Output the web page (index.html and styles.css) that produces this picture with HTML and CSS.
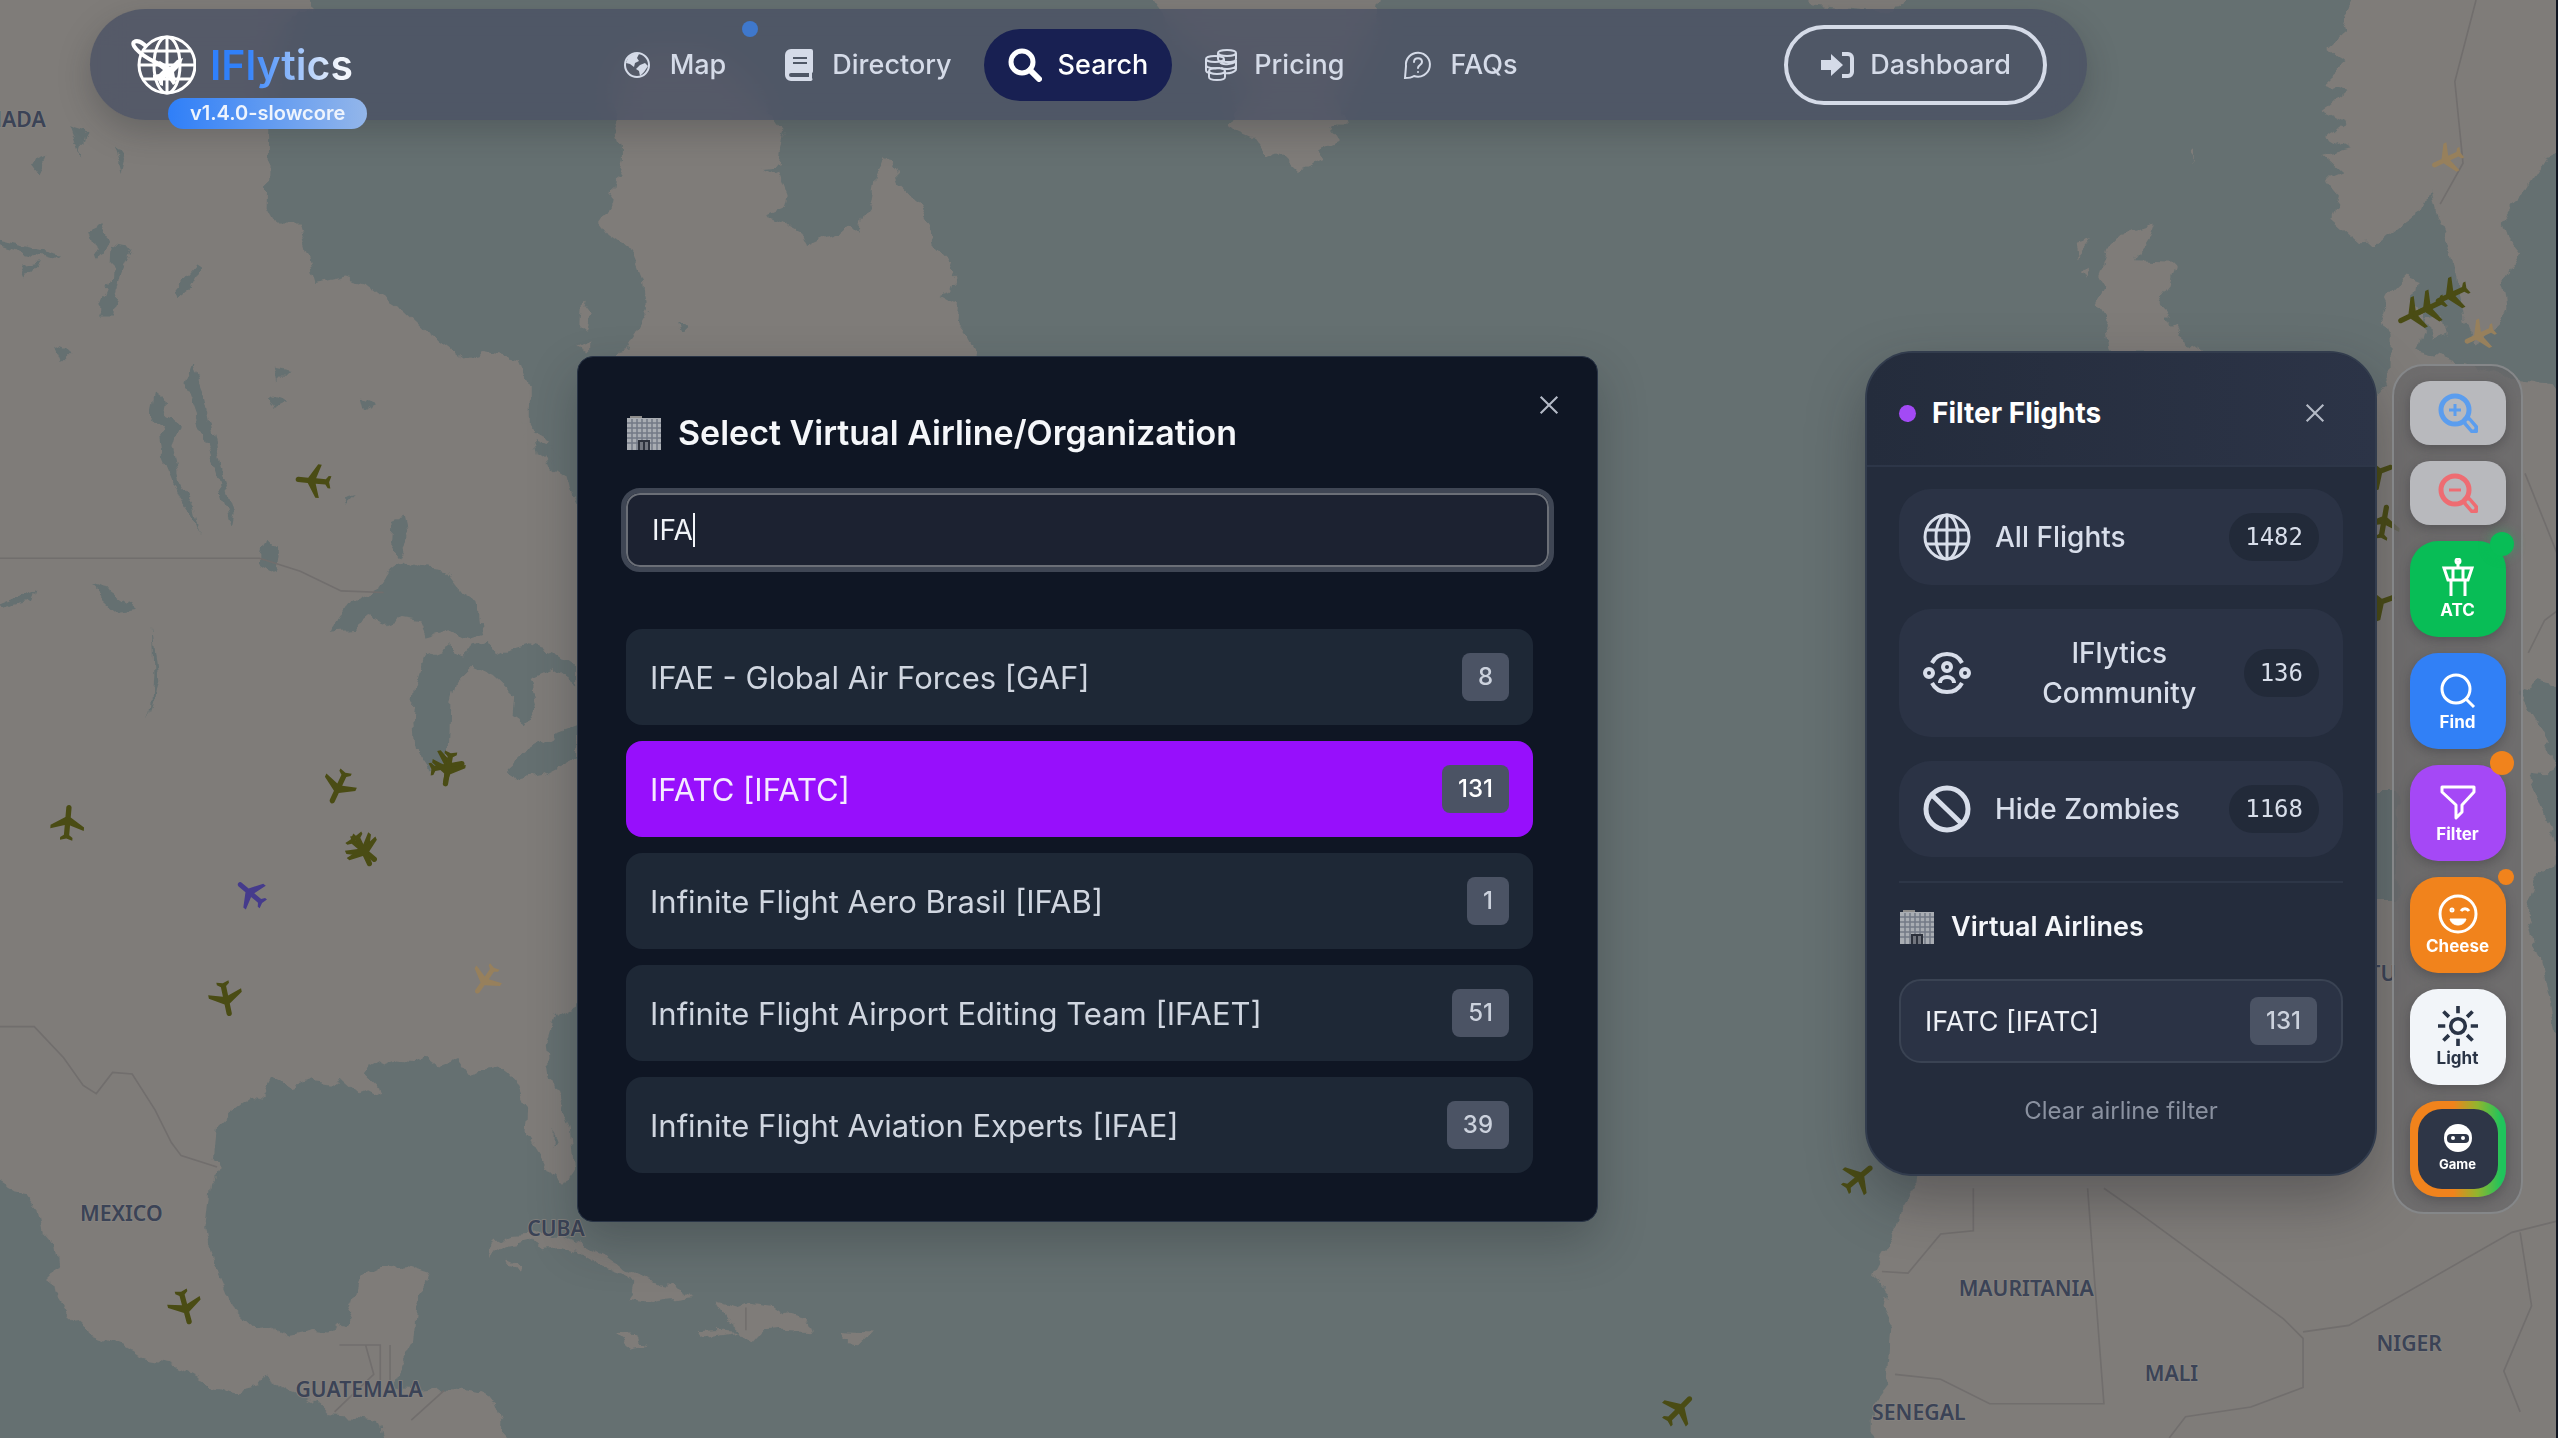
FILE: index.html
```html
<!DOCTYPE html>
<html lang="en">
<head>
<meta charset="utf-8">
<title>IFlytics</title>
<link rel="stylesheet" href="styles.css">
</head>
<body>
<svg width="0" height="0" class="defs" aria-hidden="true">
  <defs>
    <symbol id="plane" viewBox="0 0 24 24"><path d="M21 16v-2l-8-5V3.500c0-.83-.67-1.500-1.500-1.500S10 2.670 10 3.500V9l-8 5v2l8-2.500V19l-2 1.500V22l3.500-1 3.500 1v-1.500L13 19v-5.500l8 2.500z"/></symbol>
    <symbol id="building" viewBox="0 0 36 36">
      <path d="M4 1h12v4H4z" fill="#8d8c8b"/><path d="M1 3h34v32H1z" fill="#a9adb3"/>
      <path d="M1 8h34M1 13h34M1 18h34M1 23h34M1 28h34M6 4v31M11 4v31M16 4v31M21 4v31M26 4v31M31 4v31" stroke="#737a86" stroke-width="1.500"/>
      <path d="M12 25h12v10H12z" fill="#2c313c"/><path d="M14 27h3v8h-3zM19 27h3v8h-3z" fill="#71757e"/>
    </symbol>
    <symbol id="cross" viewBox="0 0 24 24"><path d="M2 2l20 20M22 2L2 22" fill="none" stroke="currentColor" stroke-width="2.500"/></symbol>
    <symbol id="globe" viewBox="0 0 48 48"><g fill="none" stroke="currentColor" stroke-width="3"><circle cx="24" cy="24" r="22"/><ellipse cx="24" cy="24" rx="11" ry="22"/><path d="M24 2v44M4 17h40M4 31h40"/></g></symbol>
    <filter id="coast" x="-2%" y="-2%" width="104%" height="104%">
      <feTurbulence type="fractalNoise" baseFrequency="0.09" numOctaves="3" seed="4" result="noise"/>
      <feDisplacementMap in="SourceGraphic" in2="noise" scale="9" xChannelSelector="R" yChannelSelector="G"/>
    </filter>
  </defs>
</svg>
<div class="page">
  <svg class="map" viewBox="0 0 1568 881" preserveAspectRatio="xMidYMid slice" aria-hidden="true">
    <g class="land" filter="url(#coast)">
      <path d="M-20 -20H186L192 4 176 14 168 40 166 80 165 128 170 137H184L188 150 195 174 212 170 224 173 235 182 248 190 262 203 273 210 285 219 298 215 318 219 325 236V262L331 270 336 284 348 292 350 302 365 330 420 320 385 250 378 222 390 205 398 190 396 170 390 155 374 144 368 136 376 124 378 112 382 98V88L377 73 380 40 400 30 440 34 466 60 475 73 481 82 478 102 468 103 479 109 483 120 481 128 470 133 478 135 492 142 495 152 508 146 516 143 522 138 527 142 530 132 535 125 538 108 543 95 550 105 553 113 560 120 565 128 570 137 573 150 581 158 587 168 584 178 577 180 588 186 587 196 594 205 600 216V560L360 600 354 616 341 623 336 640 339 660 350 690 353 716 346 726 338 718 328 702 323 694 324 680 318 665 311 657 305 653 296 655 287 660 280 650 270 654 262 648 254 652 244 651 236 654 227 650 224 657 232 665 234 672 226 668 221 670 211 661 203 664 190 662 179 666 168 659 163 669 158 673 150 676 140 684 134 690 132 710 135 718 131 725 128 753 132 773 137 784 145 803 158 815 168 814 178 819 192 816 202 817 212 811 218 798 222 783 234 777 252 775 264 779 261 792 256 802 254 823 247 836 243 850 260 852 276 850 288 852 298 854 306 859 310 870 309 900H240L232 870 218 868 203 867 196 860 190 857 180 853 165 844 160 850 147 853 130 849 122 844 105 835 88 832 76 825 56 817 43 806 35 793 33 780 36 775 34 762 28 755 25 742 16 731 10 730 0 724 -20 700z"/>
      <path d="M300 770L304 761 315 756 330 755 345 757 360 763 371 769 384 778 398 785 412 788 424 794 400 797 386 795 390 790 382 780 370 776 355 767 346 764 334 766 322 760 312 762z"/>
      <path d="M440 798L452 801 460 798 474 800 484 807 496 810 498 815 480 814 468 815 461 823 454 815 430 819 427 815 444 814 455 815 446 808zM376 817L390 818 399 824 386 826zM516 816L534 817 528 823 516 822zM312 772L320 776 319 781z"/>
      <path d="M354 212L362 208 362 216zM357 186l6 8-3 8-4-3zM320 260l18 10-2 4-12-4z"/>
      <path d="M700 -10H850L842 20 820 60 825 73 818 80 822 86 808 92 812 98 796 104 784 92 776 95 768 84 752 77 770 50 730 30zM1098 -10h87l-20 15-20 2-32-3zM1342 92l3-1v9zM1272 150l10-3-8 10zM1276 166l6-2-3 8z"/>
      <path d="M1449 -10L1436 8 1440 20 1428 30 1438 38 1424 50 1440 55 1424 68 1438 75 1426 84 1440 92 1425 96 1436 106 1426 110 1434 120 1430 134 1447 149 1460 148 1472 138 1486 128 1490 118 1494 132 1500 148 1505 165 1511 197 1517 211 1530 202 1536 190 1534 174 1545 156 1538 148 1535 136 1550 112 1560 96 1590 84V-10z"/>
      <path d="M1465 230V205L1460 190 1465 180 1476 169 1481 171 1479 185 1488 190 1486 200 1482 215 1500 220 1520 226 1540 232 1590 240V425L1555 418 1545 425 1560 450 1568 470 1558 475 1550 474 1568 520V528L1556 535 1549 560 1560 600 1568 640 1590 640V900H1147L1148 862 1157 850 1158 838 1160 810 1155 800 1157 790 1148 782 1150 775 1163 753 1166 740 1175 725 1180 700 1450 560V552H1470V484H1452V250z"/>
      <path d="M1294 216L1292 198 1286 188 1292 176 1287 168 1292 152 1300 144 1321 138 1318 146 1309 160 1334 161 1331 175 1323 186 1329 192 1336 206 1350 216zM1488 195l10-2 2 12-9 3z"/>
    </g>
    <g class="water" filter="url(#coast)">
      <path d="M203 387L215 370 232 362 240 350 249 343 260 348 274 350 283 362 294 368 297 389 288 392 276 386 262 390 258 380 246 378 236 382 226 378 216 386z"/>
      <path d="M262 402L277 396 284 401 298 394 310 400 325 396 340 401 354 410V420L340 410 326 416 330 430 322 445 315 440 316 425 304 414 290 408 280 418 277 430 276 460 272 470 262 472 256 463 254 440 256 420zM354 445L340 450 320 462 312 469 318 477 334 474 354 464z"/>
      <path d="M114 236l5-13 8 20 5 22 6 26 7 22-2 10-4-14-6-20-14-40zM96 240l8 6-2 10 8 4-4 14 6 24 8 12 4 18-5-12-8-12-10-24-2-16-6-8z"/>
      <path d="M164 330l8 8-2 14-10-6zM241 318l8-2 3 14-6 12-6-10zM170 224l10 2-8 8zM44 78l10 3-4 14zM70 88l7 10-2 8zM20 100l10-4-4 12zM55 142l8-4 4 10-6 12zM70 150l11 2-6 14-6 26-8 0 8-20zM108 178l14-16 3 2-6 12-10 8zM14 162l11-2-8 10zM36 213l10 4-6 6zM0 147l38 9-4 4-34-10zM165 243l12 4-8 4zM222 244l10 4-8 4zM0 370l22-9-2 8-18 4zM55 359l14 3 16 11-12 2zM94 385l4 30-5 25 2-28zM211 304l8-2-6 6zM417 194l6 6-4 4z"/>
      <path d="M328 269l9 4 8 8-3 4-12-8zM339 692l3 8-3 4z"/>
    </g>
    <g class="borders">
      <path d="M0 342H160L185 350 210 362 236 363M0 629H22L40 648 52 665 60 670 70 657 82 658 96 680 106 700 112 708 134 715M209 824H234V855M240 824V850M206 865L230 842 225 824M253 870l20-18M458 801v14"/>
      <path d="M1210 728V754L1190 756 1170 780 1154 779M1280 728L1290 860H1220L1190 845 1162 842M1290 728L1310 742 1400 808 1412 820V850L1380 862 1340 868 1330 881M1412 816L1440 812 1540 755 1568 748M1545 755L1552 800 1535 840 1545 865M1518 0L1505 50 1510 100 1496 125M1548 290l12 30 8 20M1550 400l10-20 8-6"/>
    </g>
    <g class="labels">
      <text x="-25" y="78">CANADA</text><text x="50" y="748">MEXICO</text><text x="324" y="757">CUBA</text><text x="182" y="856">GUATEMALA</text>
      <text x="1201" y="794">MAURITANIA</text><text x="1315" y="846">MALI</text><text x="1457" y="828">NIGER</text><text x="1148" y="870">SENEGAL</text><text x="1452" y="601">TU</text>
    </g>
    <g class="planes">
      <use href="#plane" width="26" height="26" transform="translate(193 294) rotate(-85) translate(-13 -13)"/>
      <use href="#plane" width="26" height="26" transform="translate(43 504) rotate(5) translate(-13 -13)"/>
      <use href="#plane" width="26" height="26" transform="translate(208 482) rotate(205) translate(-13 -13)"/>
      <use href="#plane" width="26" height="26" transform="translate(275 470) rotate(80) translate(-13 -13)"/>
      <use href="#plane" width="26" height="26" transform="translate(275 471) rotate(190) translate(-13 -13)"/>
      <use href="#plane" width="26" height="26" transform="translate(223 521) rotate(130) translate(-13 -13)"/>
      <use href="#plane" width="26" height="26" transform="translate(223 521) rotate(155) translate(-13 -13)"/>
      <use href="#plane" width="26" height="26" transform="translate(139 612) rotate(168) translate(-13 -13)"/>
      <use href="#plane" width="26" height="26" transform="translate(114 801) rotate(165) translate(-13 -13)"/>
      <use href="#plane" width="26" height="26" transform="translate(1140 722) rotate(50) translate(-13 -13)"/>
      <use href="#plane" width="26" height="26" transform="translate(1030 864) rotate(45) translate(-13 -13)"/>
      <use href="#plane" width="26" height="26" transform="translate(1480 192) rotate(245) translate(-13 -13)"/>
      <use href="#plane" width="26" height="26" transform="translate(1489 188) rotate(245) translate(-13 -13)"/>
      <use href="#plane" width="26" height="26" transform="translate(1503 180) rotate(245) translate(-13 -13)"/>
      <use href="#plane" width="26" height="26" transform="translate(1457 290) rotate(70) translate(-13 -13)"/>
      <use href="#plane" width="26" height="26" transform="translate(1462 320) rotate(10) translate(-13 -13)"/>
      <use href="#plane" width="26" height="26" transform="translate(1458 370) rotate(70) translate(-13 -13)"/>
      <use class="vip" href="#plane" width="24" height="24" transform="translate(155 547) rotate(-50) translate(-12 -12)"/>
      <use class="idle" href="#plane" width="24" height="24" transform="translate(298 600) rotate(215) translate(-12 -12)"/>
      <use class="idle" href="#plane" width="24" height="24" transform="translate(1500 97) rotate(245) translate(-12 -12)"/>
      <use class="idle" href="#plane" width="24" height="24" transform="translate(1520 205) rotate(245) translate(-12 -12)"/>
    </g>
  </svg>

  <header class="topbar">
    <a class="brand" href="#">
      <svg class="brand-icon" viewBox="0 0 66 62" fill="none" stroke="#fff">
        <g stroke-width="3"><circle cx="37" cy="31" r="28"/><ellipse cx="37" cy="31" rx="13" ry="28"/><path d="M37 3v56M14 17h46M9 31h56M14 45h46"/></g>
        <path d="M30 30C14 24 0 12 4 8c4-3 8 1 12 4" stroke-width="4"/>
        <path d="M30 27l10 6 7-7 6-2-3 8-6 6 2 11-3 2-6-9-4 4v6l-3-1-2-5-5-2v-3l6-1 4-4-8-6z" fill="#fff" stroke="none"/>
      </svg>
      <span class="brand-name">IFlytics</span>
      <span class="version">v1.4.0-slowcore</span>
    </a>
    <nav class="nav">
      <a class="nav-item" href="#">
        <svg class="nav-icon" viewBox="0 0 34 34"><circle cx="17" cy="17" r="12" fill="none" stroke="currentColor" stroke-width="2"/><path d="M8 10c4-5 8-5 11-4l-2 4 2 3-4 2-1 4-4-3-4-1zM20 17l5-2 3 3-4 6-4 4-1-5-3-2z" fill="currentColor"/></svg>
        Map<span class="nav-dot"></span></a>
      <a class="nav-item" href="#">
        <svg class="nav-icon" viewBox="0 0 34 34"><path d="M9 1h20a2 2 0 0 1 2 2v20a2 2 0 0 1-1 2v5a2 2 0 0 1-1 3H9a6 6 0 0 1-6-6V7a6 6 0 0 1 6-6zm0 24a2 2 0 0 0 0 4h18v-4zM11 9v2h14V9zm0 5v2h14v-2z" fill="currentColor" fill-rule="evenodd"/></svg>
        Directory</a>
      <a class="nav-item active" href="#" aria-current="page">
        <svg class="nav-icon" viewBox="0 0 34 34" fill="none" stroke="currentColor"><circle cx="14" cy="14" r="11" stroke-width="5"/><path d="M22 22l9 9" stroke-width="6" stroke-linecap="round"/></svg>
        Search</a>
      <a class="nav-item" href="#">
        <svg class="nav-icon" viewBox="0 0 34 34" fill="none" stroke="currentColor" stroke-width="2"><ellipse cx="23" cy="5" rx="9" ry="3"/><path d="M14 5v6c0 4 18 4 18 0V5M16 14c2 4 16 2 16-2v5c0 4-11 5-15 3M20 25c5 1 12-1 12-4v-5"/><ellipse cx="11" cy="11" rx="9" ry="3"/><path d="M2 11v6c0 3 8 4 14 3M20 13v-2M2 17v5c0 2 2 3 5 3"/><ellipse cx="13" cy="23" rx="8" ry="3"/><path d="M5 23v6c0 4 16 4 16 0v-6"/></svg>
        Pricing</a>
      <a class="nav-item" href="#">
        <svg class="nav-icon" viewBox="0 0 34 34" fill="none" stroke="currentColor" stroke-width="2" stroke-linecap="round"><path d="M4 30l1-12a12 12 0 1 1 8 10c-3 2-6 2-9 2z"/><path d="M13 14c0-5 8-5 8 0 0 3-4 3-4 6M17 24v0"/></svg>
        FAQs</a>
    </nav>
    <a class="dashboard" href="#">
      <svg class="nav-icon" viewBox="0 0 34 34"><path d="M1 12h10V6l12 11-12 11v-6H1z" fill="currentColor"/><path d="M22 6h6a4 4 0 0 1 4 4v14a4 4 0 0 1-4 4h-6" fill="none" stroke="currentColor" stroke-width="4"/></svg>
      Dashboard</a>
  </header>

  <main class="stage">
    <section class="modal" role="dialog" aria-labelledby="modal-title">
      <button class="close modal-close" aria-label="Close"><svg viewBox="0 0 24 24"><use href="#cross"/></svg></button>
      <h2 class="modal-title" id="modal-title"><svg class="building"><use href="#building"/></svg>Select Virtual Airline/Organization</h2>
      <div class="search-field">
        <input class="search" type="text" value="IFA" aria-label="Search airlines">
        <span class="caret"></span>
      </div>
      <div class="results">
        <button class="result">IFAE - Global Air Forces [GAF]<span class="count">8</span></button>
        <button class="result selected">IFATC [IFATC]<span class="count">131</span></button>
        <button class="result">Infinite Flight Aero Brasil [IFAB]<span class="count">1</span></button>
        <button class="result">Infinite Flight Airport Editing Team [IFAET]<span class="count">51</span></button>
        <button class="result">Infinite Flight Aviation Experts [IFAE]<span class="count">39</span></button>
      </div>
    </section>

    <aside class="filter">
      <div class="filter-head">
        <span class="filter-dot"></span>
        <h2 class="filter-title">Filter Flights</h2>
        <button class="close" aria-label="Close filter"><svg viewBox="0 0 24 24"><use href="#cross"/></svg></button>
      </div>
      <div class="filter-body">
        <button class="option"><svg class="option-icon"><use href="#globe"/></svg><span>All Flights</span><span class="total">1482</span></button>
        <button class="option wrap">
          <svg class="option-icon" viewBox="0 0 48 48" fill="none" stroke="currentColor" stroke-width="4"><circle cx="6" cy="24" r="4"/><circle cx="42" cy="24" r="4"/><circle cx="24" cy="18" r="4"/><path d="M17 34c0-8 14-8 14 0M9 14c6-12 24-12 30 0M9 34c6 12 24 12 30 0"/></svg>
          <span>IFlytics Community</span><span class="total">136</span></button>
        <button class="option">
          <svg class="option-icon" viewBox="0 0 48 48" fill="none" stroke="currentColor" stroke-width="5"><circle cx="24" cy="24" r="21"/><path d="M9 10l30 29"/></svg>
          <span>Hide Zombies</span><span class="total">1168</span></button>
        <section class="airlines">
          <h3 class="airlines-title"><svg class="building"><use href="#building"/></svg>Virtual Airlines</h3>
          <button class="airline">IFATC [IFATC]<span class="count">131</span></button>
          <button class="clear">Clear airline filter</button>
        </section>
      </div>
    </aside>

    <div class="rail">
      <button class="zoom zoom-in" aria-label="Zoom in"><svg viewBox="0 0 40 40" fill="none" stroke="currentColor"><circle cx="17" cy="17" r="14" stroke-width="5"/><path d="M17 11v12M11 17h12" stroke-width="3"/><path d="M29 28l7 8" stroke-width="10" stroke-linecap="round"/><path d="M30 29l5 6" stroke="#b8b9bd" stroke-width="3" stroke-linecap="round"/></svg></button>
      <button class="zoom zoom-out" aria-label="Zoom out"><svg viewBox="0 0 40 40" fill="none" stroke="currentColor"><circle cx="17" cy="17" r="14" stroke-width="5"/><path d="M11 17h12" stroke-width="3"/><path d="M29 28l7 8" stroke-width="10" stroke-linecap="round"/><path d="M30 29l5 6" stroke="#b8b9bd" stroke-width="3" stroke-linecap="round"/></svg></button>
      <button class="tool atc"><svg viewBox="0 0 40 40" fill="none" stroke="currentColor" stroke-width="3"><path d="M20 3v6M6 10h28l-4 12H10zM15 10v12M25 10v12M13 22v16M27 22v16"/><circle cx="20" cy="3" r="2"/></svg>ATC<span class="dot green"></span></button>
      <button class="tool find"><svg viewBox="0 0 40 40" fill="none" stroke="currentColor" stroke-width="3"><circle cx="18" cy="19" r="14"/><path d="M28 29l8 8"/></svg>Find</button>
      <button class="tool filter-tool"><svg viewBox="0 0 40 40" fill="none" stroke="currentColor" stroke-width="3" stroke-linejoin="round"><path d="M4 5h32v5L24 23v7l-6 6V23L4 10z"/></svg>Filter<span class="dot"></span></button>
      <button class="tool cheese"><svg viewBox="0 0 40 40" fill="none" stroke="currentColor" stroke-width="3"><circle cx="20" cy="20" r="18"/><path d="M12 25h16c-2 8-14 8-16 0z" fill="currentColor" stroke-width="1"/><path d="M23 17c2-3 6-3 8 0"/><circle cx="14" cy="16" r="1"/></svg>Cheese<span class="dot small"></span></button>
      <button class="tool light"><svg viewBox="0 0 44 44" fill="none" stroke="currentColor" stroke-width="4"><circle cx="22" cy="22" r="8"/><path d="M22 0v8M22 36v8M0 22h8M36 22h8M6 6l6 6M32 32l6 6M38 6l-6 6M12 32l-6 6"/></svg>Light</button>
      <button class="tool game"><span class="game-face"><svg viewBox="0 0 28 28"><circle cx="14" cy="14" r="14" fill="#fff"/><rect x="3" y="10" width="22" height="9" rx="4" fill="#2e3647"/><circle cx="9" cy="14" r="2" fill="#fff"/><circle cx="19" cy="14" r="2" fill="#fff"/></svg>Game</span></button>
    </div>
  </main>
</div>
</body>
</html>
```
FILE: styles.css
```css
* { box-sizing: border-box; }

body {
  margin: 0;
  font-family: Inter, "Liberation Sans", sans-serif;
  background: #0f1420;
}

button {
  margin: 0;
  padding: 0;
  border: 0;
  background: none;
  font: inherit;
  color: inherit;
}

a { color: inherit; text-decoration: none; }
h2, h3 { margin: 0; }
svg { display: block; flex: none; }
.defs { position: absolute; }

.page {
  position: relative;
  min-height: 100vh;
  margin-right: 2px;
  padding-top: 9px;
  overflow: hidden;
  background: #657071;
}

/* Map */
.map { position: absolute; inset: 0; width: 100%; height: 100%; }
.land { fill: #7f7c79; }
.water { fill: #657071; }
.borders { fill: none; stroke: #716e6d; stroke-width: 1; }
.labels { font: 600 13px "Noto Sans", sans-serif; fill: #3b4356; stroke: #85827f; stroke-width: 1; paint-order: stroke; }
.planes { fill: #4a4c14; }
.vip { fill: #453b8c; }
.idle { fill: #97805c; }

/* Header */
.topbar {
  position: relative;
  display: flex;
  align-items: center;
  justify-content: space-between;
  height: 111px;
  margin: 0 469px 0 90px;
  padding: 0 40px;
  border-radius: 56px;
  background: rgba(72, 79, 98, 0.76);
  backdrop-filter: blur(16px);
  box-shadow: 0 12px 32px rgba(30, 35, 40, 0.25);
  color: #d5dbe8;
  font-size: 27px;
  font-weight: 500;
}

.brand { position: relative; display: flex; align-items: center; gap: 14px; }
.brand-icon { width: 66px; height: 62px; }

.brand-name {
  font-size: 41px;
  font-weight: 600;
  line-height: 56px;
  background: linear-gradient(90deg, #3080fa 25%, #f1f5fb 90%);
  background-clip: text;
  color: transparent;
}

.version {
  position: absolute;
  top: 64px;
  left: 38px;
  padding: 0 22px;
  border-radius: 16px;
  background: linear-gradient(90deg, #2f7ff8, #93b6ea);
  color: #eef4fd;
  font-size: 20px;
  font-weight: 600;
  line-height: 31px;
  white-space: nowrap;
}

.nav { display: flex; gap: 8px; }

.nav-item {
  position: relative;
  display: flex;
  align-items: center;
  gap: 16px;
  height: 72px;
  padding: 0 24px;
  border-radius: 36px;
}

.nav-item.active { background: #182052; color: #fff; }
.nav-icon { width: 34px; height: 34px; }

.nav-dot {
  position: absolute;
  top: -8px;
  right: -8px;
  width: 16px;
  height: 16px;
  border-radius: 50%;
  background: #3f78cc;
}

.dashboard {
  display: flex;
  align-items: center;
  gap: 16px;
  height: 80px;
  padding: 0 32px;
  border: 4px solid #d5dbe8;
  border-radius: 40px;
}

/* Content row */
.stage {
  position: relative;
  display: flex;
  align-items: center;
  padding: 231px 33px 0 577px;
}

.close { color: #b4bac6; }
.close svg { width: 20px; height: 20px; }

.count {
  padding: 0 16px;
  border-radius: 8px;
  background: #4b5364;
  color: #ccd2dd;
  font-size: 24px;
  font-weight: 500;
  line-height: 48px;
}

.building { width: 36px; height: 36px; }

/* Airline picker */
.modal {
  position: relative;
  flex: 0 1 1021px;
  padding: 48px;
  border: 1px solid #283345;
  border-radius: 16px;
  background: #0f1624;
  box-shadow: 0 20px 48px rgba(30, 35, 40, 0.3);
}

.modal-close { position: absolute; top: 38px; right: 38px; }

.modal-title {
  display: flex;
  align-items: center;
  gap: 16px;
  margin-bottom: 32px;
  color: #f5f7fa;
  font-size: 34px;
  font-weight: 600;
  line-height: 56px;
}

.search-field { position: relative; margin-bottom: 62px; }

.search {
  display: block;
  width: 100%;
  height: 74px;
  padding: 0 24px;
  border: 2px solid #6b6f77;
  border-radius: 14px;
  outline: 5px solid #3f4654;
  background: #1c2231;
  color: #f1f4f8;
  font: 400 28px Inter, sans-serif;
}

.caret {
  position: absolute;
  top: 20px;
  left: 67px;
  width: 2px;
  height: 34px;
  background: #f1f4f8;
}

.results { display: flex; flex-direction: column; gap: 16px; padding-right: 16px; }

.result {
  display: flex;
  align-items: center;
  justify-content: space-between;
  height: 96px;
  padding: 0 24px;
  border-radius: 16px;
  background: #1e2836;
  color: #d0d6e0;
  font-size: 31px;
}

.result.selected { background: #970ffc; color: #f5eaff; }
.result.selected .count { color: #fff; }

/* Filter panel */
.filter {
  flex: 0 0 512px;
  margin: 0 15px 51px auto;
  border: 2px solid #323c4d;
  border-radius: 48px;
  overflow: hidden;
  background: #242c3c;
  box-shadow: 0 24px 56px rgba(30, 30, 35, 0.35);
  color: #d8deea;
  font-size: 28px;
}

.filter-head {
  display: flex;
  align-items: center;
  gap: 16px;
  height: 114px;
  padding: 8px 50px 0 32px;
  border-bottom: 2px solid #2d3648;
  background: linear-gradient(90deg, #242c3c, #2c3447);
}

.filter-dot { width: 17px; height: 17px; border-radius: 50%; background: #a34af5; }
.filter-title { flex: 1; color: #fff; font-size: 28px; font-weight: 700; }
.filter-body { display: flex; flex-direction: column; gap: 24px; padding: 22px 32px 43px; }

.option {
  display: flex;
  align-items: center;
  gap: 24px;
  min-height: 96px;
  padding: 24px;
  border-radius: 32px;
  background: #2b3345;
  font-size: 28px;
  font-weight: 500;
  line-height: 40px;
}

.option.wrap > span:nth-child(2) { flex: 1; width: 0; padding-left: 24px; }
.option-icon { width: 48px; height: 48px; }

.total {
  margin-left: auto;
  padding: 0 16px;
  border-radius: 24px;
  background: #222a39;
  font: 400 24px/48px "DejaVu Sans Mono", monospace;
}

.airlines { display: flex; flex-direction: column; padding-top: 24px; border-top: 2px solid #2d3647; }

.airlines-title {
  display: flex;
  align-items: center;
  gap: 16px;
  margin-bottom: 32px;
  color: #f4f6fa;
  font-size: 27px;
  font-weight: 600;
  line-height: 40px;
}

.airline {
  display: flex;
  align-items: center;
  justify-content: space-between;
  height: 84px;
  margin-bottom: 28px;
  padding: 0 24px;
  border: 2px solid #3a4353;
  border-radius: 22px;
  background: #2b3345;
  color: #eef1f6;
  font-size: 27px;
}

.clear { color: #8a91a0; font-size: 24px; line-height: 40px; }

/* Tool rail */
.rail {
  display: flex;
  flex: 0 0 131px;
  flex-direction: column;
  align-items: center;
  gap: 16px;
  padding: 15px;
  border: 2px solid #858789;
  border-radius: 32px;
  background: rgba(90, 92, 96, 0.45);
  backdrop-filter: blur(16px);
}

.zoom {
  display: flex;
  align-items: center;
  justify-content: center;
  width: 96px;
  height: 64px;
  border-radius: 20px;
  background: #b8b9bd;
  box-shadow: 0 4px 12px rgba(30, 30, 35, 0.3);
}

.zoom svg { width: 40px; height: 40px; }
.zoom-in { color: #5b9dee; }
.zoom-out { color: #ee6c72; }

.tool {
  position: relative;
  display: flex;
  flex-direction: column;
  align-items: center;
  justify-content: center;
  gap: 2px;
  width: 96px;
  height: 96px;
  border-radius: 28px;
  color: #fff;
  font-size: 17px;
  font-weight: 700;
  line-height: 20px;
  box-shadow: 0 4px 12px rgba(30, 30, 35, 0.3);
}

.tool svg { width: 40px; height: 40px; }
.atc { background: #08bd56; }
.find { background: #3180f6; }
.filter-tool { background: #a548f6; }
.cheese { background: #f1831c; }
.light { background: #f2f5f9; color: #2a3446; }

.game { background: linear-gradient(90deg, #f1831c 45%, #92b52e 70%, #1fc45c 95%); }

.game-face {
  display: flex;
  flex-direction: column;
  align-items: center;
  justify-content: center;
  gap: 2px;
  width: 80px;
  height: 80px;
  border-radius: 24px;
  background: #2e3647;
  font-size: 13px;
}

.game-face svg { width: 28px; height: 28px; }

.dot {
  position: absolute;
  top: -14px;
  right: -8px;
  width: 24px;
  height: 24px;
  border-radius: 50%;
  background: #f1831c;
}

.dot.green { top: -9px; background: #08bd56; box-shadow: 0 0 12px rgba(8, 189, 86, 0.4); }
.dot.small { top: -8px; width: 16px; height: 16px; }
```
